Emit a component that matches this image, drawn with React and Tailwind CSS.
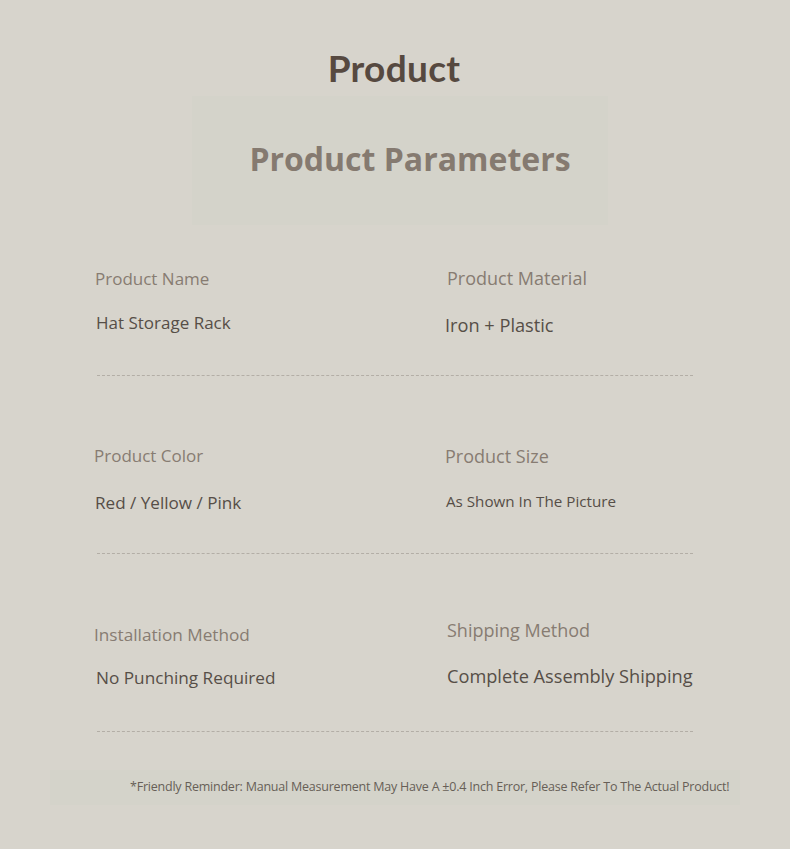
import React from "react";

const rows = [
  [
    { label: "Product Name", value: "Hat Storage Rack", pt: "pt-[69px]", mt: "mt-[20px]", lx: "ml-[-2px] text-[17px]", vx: "ml-[-1px]", vs: "text-[17px]" },
    { label: "Product Material", value: "Iron + Plastic", pt: "pt-[68px]", mt: "mt-[23px]", lx: "ml-[1px] text-[18px]", vx: "ml-[-1px]", vs: "text-[18.2px]" },
  ],
  [
    { label: "Product Color", value: "Red / Yellow / Pink", pt: "pt-[68px]", mt: "mt-[23px]", lx: "ml-[-3px] text-[17px]", vx: "ml-[-2px]", vs: "text-[17.1px]" },
    { label: "Product Size", value: "As Shown In The Picture", pt: "pt-[68px]", mt: "mt-[21px]", lx: "ml-[-1px] text-[18px]", vx: "ml-[0px]", vs: "text-[15.2px]" },
  ],
  [
    { label: "Installation Method", value: "No Punching Required", pt: "pt-[69px]", mt: "mt-[19px]", lx: "ml-[-3px] text-[17.2px]", vx: "ml-[-1px]", vs: "text-[17.2px]" },
    { label: "Shipping Method", value: "Complete Assembly Shipping", pt: "pt-[64px]", mt: "mt-[22px]", lx: "ml-[1px] text-[18px]", vx: "ml-[1px]", vs: "text-[18.2px]" },
  ],
];

function Cell({ item }) {
  return (
    <div className={`flex flex-col ${item.pt}`}>
      <div className={`h-[24px] leading-[24px] text-[#877c72] whitespace-nowrap ${item.lx}`}>
        {item.label}
      </div>
      <div className={`h-[24px] leading-[24px] text-[#564e47] whitespace-nowrap ${item.vs} ${item.mt} ${item.vx}`}>
        {item.value}
      </div>
    </div>
  );
}

export default function App() {
  return (
    <div
      className="w-[790px] h-[849px] bg-[#d7d4cc] overflow-hidden"
      style={{ fontFamily: '"Open Sans", "Noto Sans", sans-serif' }}
    >
      <div className="pt-[46px] h-[96px]">
        <h1
          className="text-center text-[37px] leading-[44px] font-bold text-[#564940] mr-[2px] tracking-[0.3px]"
          style={{ fontFamily: "Lato, sans-serif" }}
        >
          Product
        </h1>
      </div>

      <div className="ml-[192px] w-[416px] h-[129px] bg-[#d4d3ca] flex items-center justify-center -mb-[27px]">
        <h2 className="text-[32px] leading-[40px] font-bold text-[#857a70] ml-[20px] mt-[-4px]">
          Product Parameters
        </h2>
      </div>

      <div className="mx-[97px] relative">
        {rows.map((row, i) => (
          <div
            key={i}
            className="grid grid-cols-[349px_1fr] h-[178px] border-b border-dashed border-[#b3aea6]"
          >
            <Cell item={row[0]} />
            <Cell item={row[1]} />
          </div>
        ))}
      </div>

      <div className="mt-[38px] mx-[50px] h-[35px] bg-[#d4d3ca] flex items-center">
        <p className="ml-[80px] mt-[-1px] text-[12.5px] text-[#675f57] whitespace-nowrap tracking-[-0.22px]">
          *Friendly Reminder: Manual Measurement May Have A ±0.4 Inch Error, Please Refer To The Actual Product!
        </p>
      </div>
    </div>
  );
}
